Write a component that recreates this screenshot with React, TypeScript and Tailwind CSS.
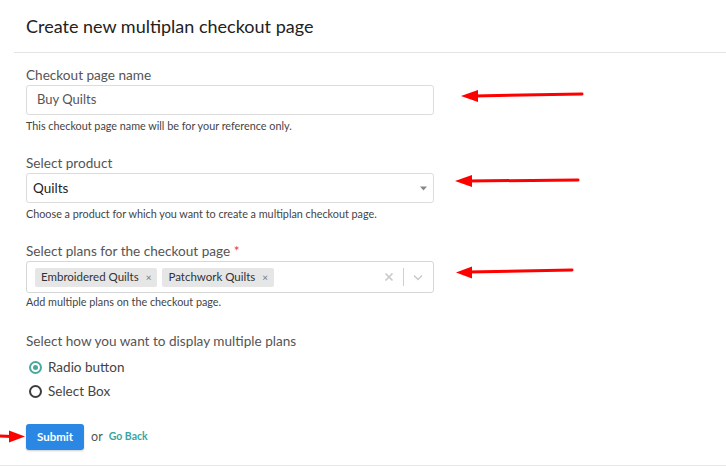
import React from "react";

function Radio({ checked, label }: { checked?: boolean; label: string }) {
  return (
    <div className="flex items-center h-[24px]">
      {checked ? (
        <span className="w-[13px] h-[13px] rounded-full border-[2px] border-[#4aa99b] flex items-center justify-center ml-[3px]">
          <span className="w-[5px] h-[5px] rounded-full bg-[#4aa99b]" />
        </span>
      ) : (
        <span className="w-[13px] h-[13px] rounded-full border-[2px] border-[#3d3d3d] ml-[3px]" />
      )}
      <span className="ml-[6px] text-[13.5px] text-[#444]">{label}</span>
    </div>
  );
}

function Tag({ label }: { label: string }) {
  return (
    <span className="flex items-center h-[19px] bg-[#e6e6e6] rounded-[2px] pl-[6px] pr-[6px] text-[11.5px] text-[#333]">
      {label}
      <span className="ml-[7px] text-[10px] text-[#777] leading-none">×</span>
    </span>
  );
}

export default function App() {
  return (
    <div
      className="relative w-[726px] h-[468px] bg-white overflow-hidden"
      style={{ fontFamily: "Lato, 'Noto Sans', sans-serif" }}
    >
      <div className="ml-[14px] h-[53px] pl-[12px] border-b border-[#e4e4e4] flex items-center">
        <h1 className="text-[18px] text-[#222] pt-[1px]">Create new multiplan checkout page</h1>
      </div>

      <div className="pl-[26px] w-[434px]">
        <div className="mt-[13px] text-[13.6px] leading-[18px] text-[#555]">Checkout page name</div>
        <div className="mt-[1px] h-[30px] border border-[#dcdcdc] rounded-[3px] flex items-center pl-[10px] text-[13px] text-[#555]">
          Buy Quilts
        </div>
        <div className="mt-[4px] text-[10.8px] leading-[14px] text-[#444]">
          This checkout page name will be for your reference only.
        </div>

        <div className="mt-[21px] text-[13.6px] leading-[18px] text-[#555]">Select product</div>
        <div className="mt-[1px] h-[30px] border border-[#dcdcdc] rounded-[3px] flex items-center justify-between pl-[6px] pr-[6px] text-[13.5px] text-[#222]">
          <span>Quilts</span>
          <svg width="7" height="5" viewBox="0 0 7 5">
            <path d="M0 0.5 L7 0.5 L3.5 4.5 Z" fill="#888" />
          </svg>
        </div>
        <div className="mt-[4px] text-[10.8px] leading-[14px] text-[#444]">
          Choose a product for which you want to create a multiplan checkout page.
        </div>

        <div className="mt-[21px] text-[13.6px] leading-[18px] text-[#555]">
          Select plans for the checkout page <span className="text-[#e03a3a]">*</span>
        </div>
        <div className="mt-[1px] h-[32px] border border-[#d6d6d6] rounded-[3px] flex items-center pl-[8px] pr-[10px]">
          <div className="flex gap-[5px] flex-1">
            <Tag label="Embroidered Quilts" />
            <Tag label="Patchwork Quilts" />
          </div>
          <svg width="10" height="10" viewBox="0 0 10 10" className="mr-[9px]">
            <path d="M1.5 1.5 L8.5 8.5 M8.5 1.5 L1.5 8.5" stroke="#c8c8c8" strokeWidth="1.6" />
          </svg>
          <span className="w-px h-[18px] bg-[#d0d0d0] mr-[9px]" />
          <svg width="10" height="7" viewBox="0 0 10 7">
            <path d="M1 1.5 L5 5.5 L9 1.5" stroke="#c8c8c8" strokeWidth="1.3" fill="none" />
          </svg>
        </div>
        <div className="mt-[2px] text-[10.8px] leading-[14px] text-[#444]">
          Add multiple plans on the checkout page.
        </div>

        <div className="mt-[23px] text-[13.6px] leading-[18px] text-[#555]">
          Select how you want to display multiple plans
        </div>
        <div className="mt-[5px]">
          <Radio checked label="Radio button" />
          <Radio label="Select Box" />
        </div>

        <div className="mt-[21px] flex items-center">
          <button className="h-[26px] px-[11px] bg-[#2a88e4] rounded-[3px] text-white text-[11.5px] font-bold shadow-[0_1px_2px_rgba(0,0,0,0.2)]">
            Submit
          </button>
          <span className="ml-[7px] text-[12.5px] text-[#555]">or</span>
          <span className="ml-[6px] text-[10.5px] font-bold text-[#3aa5a0]">Go Back</span>
        </div>
      </div>

      <div className="absolute left-0 right-0 top-[465px] h-px bg-[#e3e8ee]" />

      <svg className="absolute inset-0 pointer-events-none" width="726" height="468" viewBox="0 0 726 468">
        <g fill="#ff0000" stroke="#ff0000">
          <line x1="582" y1="94" x2="474" y2="96" strokeWidth="3" strokeLinecap="round" />
          <polygon points="461,96 478,90 478,102" stroke="none" />
          <line x1="578" y1="180" x2="468" y2="181" strokeWidth="3" strokeLinecap="round" />
          <polygon points="455,181 472,175 472,187" stroke="none" />
          <line x1="572" y1="270" x2="468" y2="272" strokeWidth="3" strokeLinecap="round" />
          <polygon points="456,272.5 472,266.5 472,278.5" stroke="none" />
          <line x1="0" y1="436" x2="12" y2="436.5" strokeWidth="3" />
          <polygon points="25,436.5 9,430.5 9,442.5" stroke="none" />
        </g>
      </svg>
    </div>
  );
}
